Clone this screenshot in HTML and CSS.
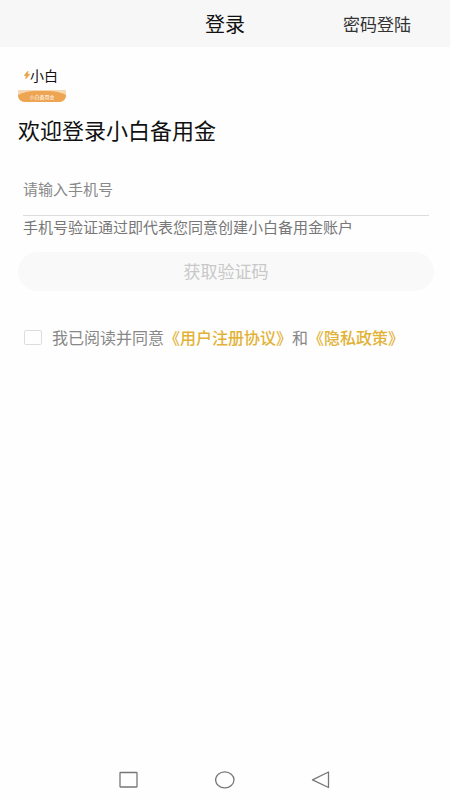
FILE: index.html
```html
<!DOCTYPE html>
<html lang="zh-CN">
<head>
<meta charset="utf-8">
<meta name="viewport" content="width=device-width, initial-scale=1">
<title>登录</title>
<link rel="stylesheet" href="styles.css">
</head>
<body>
<header class="topbar">
  <h1 class="topbar-title">登录</h1>
  <a class="topbar-link" href="#">密码登陆</a>
</header>
<main class="content">
  <div class="logo">
    <div class="logo-name"><svg class="spark" viewBox="0 0 6 8"><path d="M4 0L0 4.6H2.2L1.6 8L6 3.2H3.7Z" fill="#e9a24c" stroke="#e9a24c" stroke-width=".6"/></svg>小白</div>
    <div class="logo-band"><svg class="band-shape" viewBox="0 0 48 12" preserveAspectRatio="none"><path d="M0 0H48V6Q47 12 40 12H8Q1 12 0 6Z" fill="#f6d8b4"/><path d="M0 5Q8 1 17 1H31Q40 1 48 5V6Q47 12 40 12H8Q1 12 0 6Z" fill="#eda552"/></svg><span class="band-text">小白备用金</span></div>
  </div>
  <h2 class="welcome">欢迎登录小白备用金</h2>
  <form class="form">
    <input class="phone" type="tel" placeholder="请输入手机号" aria-label="手机号">
    <p class="hint">手机号验证通过即代表您同意创建小白备用金账户</p>
    <button class="submit" type="button">获取验证码</button>
    <div class="agree">
      <input class="check" type="checkbox" id="agree">
      <label for="agree">我已阅读并同意</label><a href="#">《用户注册协议》</a><span>和</span><a href="#">《隐私政策》</a>
    </div>
  </form>
</main>
<nav class="navbar">
  <button type="button" aria-label="最近任务"><svg viewBox="0 0 20 20"><rect x="1" y="2.5" width="17" height="14.5" rx=".5"/></svg></button>
  <button type="button" aria-label="主页"><svg viewBox="0 0 20 20"><ellipse cx="9.8" cy="9.8" rx="9.2" ry="8"/></svg></button>
  <button type="button" aria-label="返回"><svg viewBox="0 0 20 20"><path d="M17.5 2V17.5L1.5 9.8Z" stroke-linejoin="round"/></svg></button>
</nav>
</body>
</html>
```
FILE: styles.css
```css
* { box-sizing: border-box; }
body {
  margin: 0;
  min-height: 100vh;
  display: flex;
  flex-direction: column;
  background: #fefefe;
  color: #111;
  font-family: "Noto Sans CJK SC", sans-serif;
}
h1, h2, p { margin: 0; font-weight: 400; }
a { text-decoration: none; color: inherit; }
.topbar {
  display: grid;
  grid-template-columns: 1fr auto 1fr;
  align-items: center;
  height: 47px;
  padding: 0 39px;
  background: #f7f7f7;
}
.topbar-title { grid-column: 2; font-size: 20px; line-height: 28px; }
.topbar-link { justify-self: end; font-size: 17px; line-height: 28px; color: #333; white-space: nowrap; }
.content { flex: 1; padding: 16px 16px 0 18px; }
.logo { width: 48px; height: 39px; }
.logo-name {
  display: flex;
  align-items: center;
  justify-content: center;
  height: 27px;
  padding: 0 2px 4px 0;
  font-size: 14px;
  line-height: 20px;
}
.spark { width: 6px; height: 8px; }
.logo-band { position: relative; height: 12px; }
.band-shape { display: block; width: 100%; height: 100%; }
.band-text { position: absolute; inset: 0; font-size: 5px; line-height: 14px; text-align: center; color: #fff; }
.welcome { margin-top: 13px; font-size: 22px; line-height: 28px; }
.form { margin-top: 29px; }
.phone {
  display: block;
  width: calc(100% - 10px);
  height: 44px;
  margin-left: 5px;
  padding: 0 0 10px;
  border: 0;
  border-bottom: 1px solid #ddd;
  background: none;
  font: inherit;
  font-size: 15px;
  outline: none;
}
.phone::placeholder { color: #888; opacity: 1; }
.hint { margin: 1px 0 15px 5px; font-size: 15px; line-height: 20px; color: #777; }
.submit {
  display: block;
  width: 100%;
  height: 39px;
  padding: 0 0 2px;
  border: 0;
  border-radius: 20px;
  background: #f9f9f9;
  color: #c8c8c8;
  font: inherit;
  font-size: 17px;
}
.agree { display: flex; align-items: center; margin: 34px 0 0 6px; font-size: 16px; line-height: 24px; color: #888; white-space: nowrap; }
.check { appearance: none; width: 18px; height: 15px; margin: 0 10px 0 0; border: 1px solid #ddd; border-radius: 2px; }
.agree a { color: #e2b236; font-weight: 500; }
.navbar { display: flex; justify-content: center; gap: 76px; height: 40px; }
.navbar button { width: 20px; padding: 0; border: 0; background: none; }
.navbar svg { display: block; width: 20px; height: 20px; fill: none; stroke: #777; stroke-width: 1.3; }
```
